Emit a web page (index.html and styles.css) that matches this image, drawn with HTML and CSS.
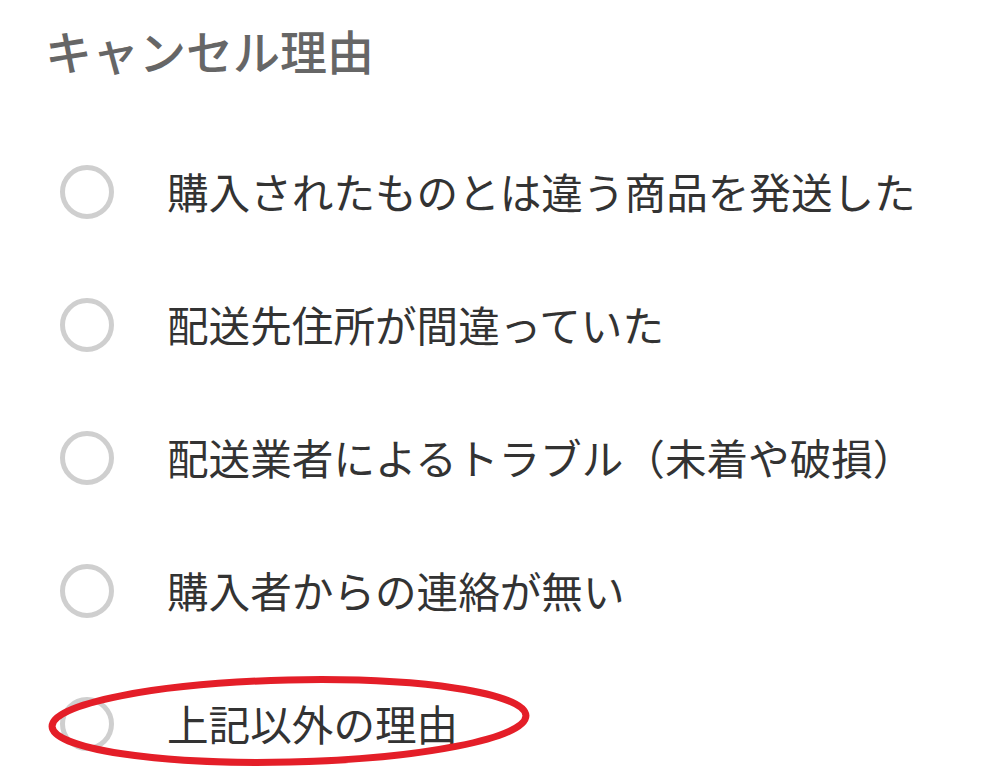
FILE: index.html
```html
<!DOCTYPE html>
<html>
  <head>
    <title>キャンセル理由</title>
    <link rel="stylesheet" href="styles.css">
  </head>
  <body>
    <main class="cancel">
      <h1 class="cancel-title">キャンセル理由</h1>
      <ul class="reasons">
        <li class="reason"><span class="radio"></span><span class="reason-text">購入されたものとは違う商品を発送した</span></li>
        <li class="reason"><span class="radio"></span><span class="reason-text">配送先住所が間違っていた</span></li>
        <li class="reason"><span class="radio"></span><span class="reason-text">配送業者によるトラブル（未着や破損）</span></li>
        <li class="reason"><span class="radio"></span><span class="reason-text">購入者からの連絡が無い</span></li>
        <li class="reason reason-marked">
          <span class="radio"></span><span class="reason-text">上記以外の理由</span>
          <svg class="marker" width="500" height="100" viewBox="0 0 500 100">
            <ellipse cx="241" cy="47" rx="237" ry="41" fill="none" stroke="#e41e28" stroke-width="7" transform="rotate(-1.3 241 47)"/>
          </svg>
        </li>
      </ul>
    </main>
  </body>
</html>
```

FILE: styles.css
```css
body {
  margin: 0;
  padding: 0;
  background: #fff;
  font-family: "Noto Sans CJK JP", "Noto Sans", sans-serif;
}

.cancel-title {
  margin: 0;
  padding: 22px 0 0 45px;
  font-size: 47px;
  line-height: 56px;
  font-weight: 500;
  color: #666;
}

.reasons {
  list-style: none;
  margin: 47px 0 0;
  padding: 0;
}

.reason {
  position: relative;
  height: 133px;
  display: flex;
  align-items: center;
  padding-left: 60px;
}

.radio {
  box-sizing: border-box;
  width: 54px;
  height: 54px;
  border: 5px solid #cfcfcf;
  border-radius: 50%;
  flex-shrink: 0;
}

.reason-text {
  margin-left: 53px;
  font-size: 41.6px;
  color: #333;
  line-height: 1;
}

/* red circle drawn over the last option */
.marker {
  position: absolute;
  left: 48px;
  top: 17px;
}
```
